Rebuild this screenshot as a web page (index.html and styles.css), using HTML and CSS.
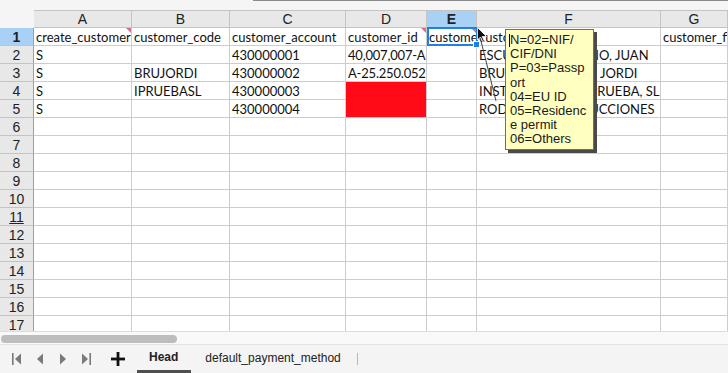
FILE: index.html
```html
<!DOCTYPE html>
<html lang="en">
<head>
    <meta charset="UTF-8">
    <title>Head - spreadsheet</title>
    <link rel="stylesheet" href="styles.css">
</head>
<body>
    <div class="app">
        <div class="topbar"><div class="formula-edge"></div></div>

        <div class="sheet">
            <div class="row head">
                <div class="corner"></div>
                <div class="colhead">A</div>
                <div class="colhead">B</div>
                <div class="colhead">C</div>
                <div class="colhead">D</div>
                <div class="colhead sel">E</div>
                <div class="colhead">F</div>
                <div class="colhead">G</div>
            </div>
            <div class="row">
                <div class="rowhead sel">1</div>
                <div class="cell note">create_customer</div>
                <div class="cell">customer_code</div>
                <div class="cell">customer_account</div>
                <div class="cell note">customer_id</div>
                <div class="cell note">customer_id_type</div>
                <div class="cell">customer_name</div>
                <div class="cell">customer_fiscal_name</div>
            </div>
            <div class="row">
                <div class="rowhead">2</div>
                <div class="cell">S</div>
                <div class="cell"></div>
                <div class="cell">430000001</div>
                <div class="cell num">40,007,007-A</div>
                <div class="cell"></div>
                <div class="cell">ESCUDERO MORENO, JUAN</div>
                <div class="cell"></div>
            </div>
            <div class="row">
                <div class="rowhead">3</div>
                <div class="cell">S</div>
                <div class="cell">BRUJORDI</div>
                <div class="cell">430000002</div>
                <div class="cell num">A-25.250.052</div>
                <div class="cell"></div>
                <div class="cell">BRUCH SERRANOS, JORDI</div>
                <div class="cell"></div>
            </div>
            <div class="row">
                <div class="rowhead">4</div>
                <div class="cell">S</div>
                <div class="cell">IPRUEBASL</div>
                <div class="cell">430000003</div>
                <div class="cell red red-top"></div>
                <div class="cell"></div>
                <div class="cell">INST. DE TESTING PRUEBA, SL</div>
                <div class="cell"></div>
            </div>
            <div class="row">
                <div class="rowhead">5</div>
                <div class="cell">S</div>
                <div class="cell"></div>
                <div class="cell">430000004</div>
                <div class="cell red"></div>
                <div class="cell"></div>
                <div class="cell">RODILLO CONSTRUCCIONES</div>
                <div class="cell"></div>
            </div>
            <div class="row"><div class="rowhead">6</div><div class="cell"></div><div class="cell"></div><div class="cell"></div><div class="cell"></div><div class="cell"></div><div class="cell"></div><div class="cell"></div></div>
            <div class="row"><div class="rowhead">7</div><div class="cell"></div><div class="cell"></div><div class="cell"></div><div class="cell"></div><div class="cell"></div><div class="cell"></div><div class="cell"></div></div>
            <div class="row"><div class="rowhead">8</div><div class="cell"></div><div class="cell"></div><div class="cell"></div><div class="cell"></div><div class="cell"></div><div class="cell"></div><div class="cell"></div></div>
            <div class="row"><div class="rowhead">9</div><div class="cell"></div><div class="cell"></div><div class="cell"></div><div class="cell"></div><div class="cell"></div><div class="cell"></div><div class="cell"></div></div>
            <div class="row"><div class="rowhead">10</div><div class="cell"></div><div class="cell"></div><div class="cell"></div><div class="cell"></div><div class="cell"></div><div class="cell"></div><div class="cell"></div></div>
            <div class="row"><div class="rowhead"><u>11</u></div><div class="cell"></div><div class="cell"></div><div class="cell"></div><div class="cell"></div><div class="cell"></div><div class="cell"></div><div class="cell"></div></div>
            <div class="row"><div class="rowhead">12</div><div class="cell"></div><div class="cell"></div><div class="cell"></div><div class="cell"></div><div class="cell"></div><div class="cell"></div><div class="cell"></div></div>
            <div class="row"><div class="rowhead">13</div><div class="cell"></div><div class="cell"></div><div class="cell"></div><div class="cell"></div><div class="cell"></div><div class="cell"></div><div class="cell"></div></div>
            <div class="row"><div class="rowhead">14</div><div class="cell"></div><div class="cell"></div><div class="cell"></div><div class="cell"></div><div class="cell"></div><div class="cell"></div><div class="cell"></div></div>
            <div class="row"><div class="rowhead">15</div><div class="cell"></div><div class="cell"></div><div class="cell"></div><div class="cell"></div><div class="cell"></div><div class="cell"></div><div class="cell"></div></div>
            <div class="row"><div class="rowhead">16</div><div class="cell"></div><div class="cell"></div><div class="cell"></div><div class="cell"></div><div class="cell"></div><div class="cell"></div><div class="cell"></div></div>
            <div class="row"><div class="rowhead">17</div><div class="cell"></div><div class="cell"></div><div class="cell"></div><div class="cell"></div><div class="cell"></div><div class="cell"></div><div class="cell"></div></div>

            <!-- overlays: cell cursor, comment popup and its anchor line -->
            <div class="cursor-cell"><span class="handle"></span></div>
            <svg class="callout" width="728" height="330" viewBox="0 0 728 330">
                <line x1="478" y1="19" x2="496" y2="91" stroke="#444" stroke-width="1"/>
                <path d="M477.5 17.5 L477.5 30 L480.5 27 L483 32 L484.5 31.3 L482.2 26.5 L486.5 26.5 Z" fill="#111" stroke="#fff" stroke-width="0.8"/>
            </svg>
            <div class="comment">
                <div class="comment-text"><span class="caret"></span>N=02=NIF/<br>CIF/DNI<br>P=03=Passp<br>ort<br>04=EU ID<br>05=Residenc<br>e permit<br>06=Others</div>
            </div>
        </div>

        <div class="hscroll"><div class="thumb"></div></div>

        <div class="tabbar">
            <div class="nav">
                <svg width="12" height="14" viewBox="0 0 12 14"><rect x="1" y="1" width="1.6" height="12" fill="#7a7a7a"/><path d="M10 1.5 L4 7 L10 12.5 Z" fill="#7a7a7a"/></svg>
                <svg width="12" height="14" viewBox="0 0 12 14"><path d="M9 1.5 L3 7 L9 12.5 Z" fill="#7a7a7a"/></svg>
                <svg width="12" height="14" viewBox="0 0 12 14"><path d="M3 1.5 L9 7 L3 12.5 Z" fill="#7a7a7a"/></svg>
                <svg width="12" height="14" viewBox="0 0 12 14"><path d="M2 1.5 L8 7 L2 12.5 Z" fill="#7a7a7a"/><rect x="9.4" y="1" width="1.6" height="12" fill="#7a7a7a"/></svg>
            </div>
            <svg class="add" width="14" height="14" viewBox="0 0 14 14"><rect x="5.6" y="0" width="2.8" height="14" fill="#111"/><rect x="0" y="5.6" width="14" height="2.8" fill="#111"/></svg>
            <div class="tab active">Head</div>
            <div class="tab">default_payment_method</div>
            <div class="tab-sep"></div>
        </div>
    </div>
</body>
</html>
```

FILE: styles.css
```css
body {
    margin: 0;
    overflow: hidden;
    background: #f4f4f4;
    font-family: "Liberation Sans", Arial, sans-serif;
}

.app {
    width: 728px;
    height: 373px;
    display: flex;
    flex-direction: column;
    overflow: hidden;
}

.topbar {
    height: 10px;
    background: #f5f5f5;
    position: relative;
}

.formula-edge {
    margin-left: 253px;
    height: 1px;
    background: #8a8a8a;
}

.sheet {
    position: relative;
    height: 321px;
    overflow: hidden;
    background: #fff;
}

.row {
    display: grid;
    grid-template-columns: 34px 98px 98px 116px 81px 50px 184px 67px;
    height: 18px;
}

.row > div {
    box-sizing: border-box;
    height: 18px;
    overflow: hidden;
    white-space: nowrap;
}

.corner {
    background: #f5f5f5;
}

.colhead {
    background: #e8e8e8;
    border-top: 1px solid #c4c4c4;
    border-right: 1px solid #c4c4c4;
    border-bottom: 1px solid #c4c4c4;
    text-align: center;
    font-size: 14px;
    line-height: 16px;
    color: #222;
}

.colhead.sel {
    background: #a9d1f5;
    font-weight: bold;
}

.rowhead {
    background: #e8e8e8;
    border-right: 1px solid #9e9e9e;
    border-bottom: 1px solid #c4c4c4;
    text-align: center;
    font-size: 14px;
    line-height: 18px;
    color: #222;
}

.rowhead.sel {
    background: #a9d1f5;
    font-weight: bold;
}

.rowhead u {
    text-decoration-thickness: 1px;
}

.cell {
    border-right: 1px solid #cdcdcd;
    border-bottom: 1px solid #cdcdcd;
    padding-left: 2px;
    font-family: Lato, "Liberation Sans", sans-serif;
    font-size: 13px;
    line-height: 18px;
    color: #111;
    position: relative;
}

.cell.num {
    letter-spacing: -0.2px;
}

.cell.red {
    background: #ff0a16;
}

.cell.red-top {
    border-bottom-color: #ff0a16;
}

.cell.note::after {
    content: "";
    position: absolute;
    top: 0;
    right: 0;
    border-top: 5px solid #d9708a;
    border-left: 5px solid transparent;
}

.cursor-cell {
    position: absolute;
    left: 427px;
    top: 17px;
    width: 51px;
    height: 19px;
    box-sizing: border-box;
    border: 2px solid #1f7fe6;
}

.handle {
    position: absolute;
    right: -4px;
    bottom: -4px;
    width: 5px;
    height: 5px;
    background: #1f7fe6;
    border: 1px solid #fff;
}

.callout {
    position: absolute;
    left: 0;
    top: 0;
}

.comment {
    position: absolute;
    left: 505px;
    top: 19px;
    width: 89px;
    height: 121px;
    box-sizing: border-box;
    background: #ffffc0;
    border: 1px solid #6e6e6e;
    box-shadow: 3px 3px 0 #4a4a4a;
    padding: 3px 0 0 4px;
}

.comment-text {
    font-size: 13px;
    line-height: 14.2px;
    color: #1a1a1a;
    white-space: nowrap;
    position: relative;
}

.caret {
    position: absolute;
    left: -1px;
    top: 1px;
    width: 1px;
    height: 13px;
    background: #000;
}

.hscroll {
    height: 14px;
    box-sizing: border-box;
    background: #f9f9f9;
    border-top: 1px solid #dcdcdc;
    border-bottom: 1px solid #e2e2e2;
    padding: 3px 0 0 1px;
}

.thumb {
    width: 176px;
    height: 8px;
    border-radius: 4px;
    background: #bdbdbd;
}

.tabbar {
    flex: 1;
    display: flex;
    align-items: center;
    background: #f4f4f4;
    font-size: 12px;
    color: #222;
}

.nav {
    display: flex;
    gap: 11px;
    margin-left: 11px;
}

.add {
    margin-left: 19px;
}

.tab {
    height: 28px;
    line-height: 26px;
    box-sizing: border-box;
}

.tab.active {
    margin-left: 12px;
    padding: 0 13px 0 12px;
    font-weight: bold;
    border-bottom: 3px solid #4f4f4f;
    line-height: 25px;
}

.tab + .tab {
    margin-left: 14px;
}

.tab-sep {
    margin-left: 16px;
    width: 1px;
    height: 12px;
    background: #b8b8b8;
}
```
